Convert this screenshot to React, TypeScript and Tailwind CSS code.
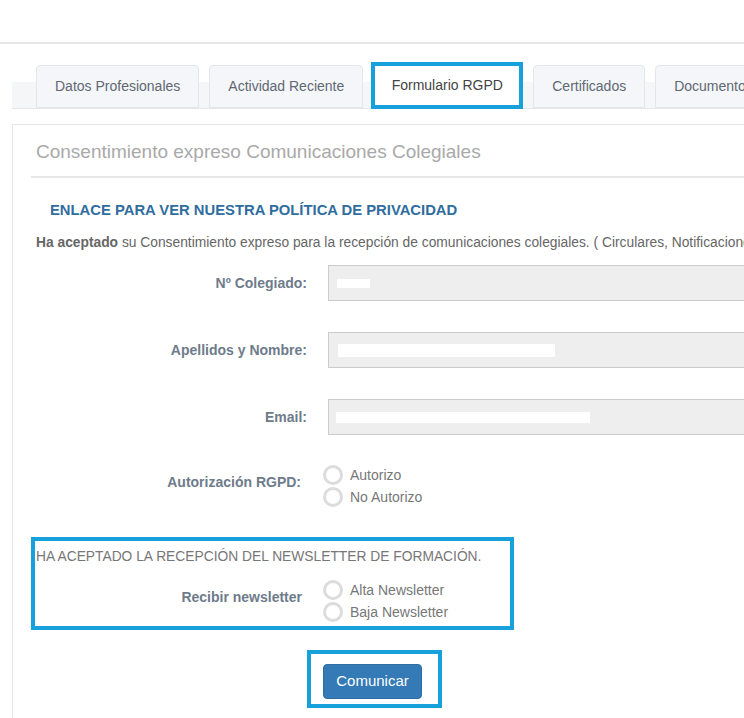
export default function App() {
  const tabs = ["Datos Profesionales", "Actividad Reciente", "Formulario RGPD", "Certificados", "Documentos"];
  const Radio = ({ label }: { label: string }) => (
    <div className="flex items-center h-[20px]">
      <span className="w-[20px] h-[20px] rounded-full border-[3px] border-[#dcdcdc] bg-white shrink-0" />
      <span className="ml-[7px] text-[14px] text-[#777777] leading-none">{label}</span>
    </div>
  );
  const Field = ({ label, bar, first }: { label: string; bar: { l: number; w: number; h: number }; first?: boolean }) => (
    <div className={`flex items-center ${first ? "mt-[13px]" : "mt-[31px]"}`}>
      <div className="w-[294px] text-right text-[14px] font-bold text-[#6e7b8b]">{label}</div>
      <div className="ml-[21px] w-[500px] h-[36px] bg-[#eeeeee] border border-[#cccccc] flex items-center">
        <div className="bg-white" style={{ marginLeft: bar.l, width: bar.w, height: bar.h }} />
      </div>
    </div>
  );
  return (
    <div className="w-[744px] h-[718px] overflow-hidden bg-white font-['Liberation_Sans',Arial,sans-serif]">
      <div className="w-[1000px]">
        <div className="h-[42px]" />
        <div className="h-[2px] bg-[#e6e6e6]" />
        {/* tabs */}
        <div className="mt-[18px] ml-[12px] pl-[24px] flex items-end gap-[10px] h-[47px] border-b border-[#e4e6e9] bg-[linear-gradient(to_bottom,transparent_20px,#f5f6f8_20px)]">
          {tabs.map((t, i) =>
            i === 2 ? (
              <div key={t} className="h-[47px] w-[152px] -ml-[2px] -mb-[1px] border-4 border-[#17a1dc] bg-white flex items-center justify-center text-[14px] text-[#444444]">
                {t}
              </div>
            ) : (
              <div key={t} className="h-[43px] px-[18px] border border-[#e3e6ea] rounded-t-[4px] bg-[#f4f6f9] flex items-center text-[14px] text-[#5f6873]">
                {t}
              </div>
            )
          )}
        </div>
        {/* panel */}
        <div className="mt-[15px] ml-[12px] border border-[#e6e6e6] h-[600px]">
          <div className="mx-[18px] pt-[17px] pb-[14px] border-b-2 border-[#e8e8e8]">
            <div className="pl-[5px] text-[19px] leading-[20px] text-[#a9a9a9]">Consentimiento expreso Comunicaciones Colegiales</div>
          </div>
          <div className="mt-[23px] pl-[37px] text-[14.8px] leading-[18px] font-bold text-[#2f6d9e]">ENLACE PARA VER NUESTRA POLÍTICA DE PRIVACIDAD</div>
          <div className="mt-[15px] pl-[23px] text-[13.8px] leading-[18px] text-[#666666] whitespace-nowrap">
            <span className="font-bold">Ha aceptado</span> su Consentimiento expreso para la recepción de comunicaciones colegiales. ( Circulares, Notificaciones )
          </div>
          <Field first label="Nº Colegiado:" bar={{ l: 8, w: 33, h: 9 }} />
          <Field label="Apellidos y Nombre:" bar={{ l: 9, w: 217, h: 13 }} />
          <Field label="Email:" bar={{ l: 7, w: 254, h: 11 }} />
          {/* RGPD */}
          <div className="mt-[30px] flex items-center">
            <div className="w-[294px] pr-[6px] pb-[7px] text-right text-[14px] font-bold text-[#6e7b8b]">Autorización RGPD:</div>
            <div className="ml-[16px] flex flex-col gap-[2px]">
              <Radio label="Autorizo" />
              <Radio label="No Autorizo" />
            </div>
          </div>
          {/* newsletter */}
          <div className="mt-[30px] ml-[18px] w-[483px] border-4 border-[#17a1dc] pl-[1px] pt-[7px] pb-[4px]">
            <div className="text-[13.8px] leading-[18px] text-[#777777] uppercase whitespace-nowrap">HA ACEPTADO LA RECEPCIÓN DEL NEWSLETTER DE FORMACIÓN.</div>
            <div className="mt-[14px] flex items-center">
              <div className="w-[266px] pb-[8px] text-right text-[14px] font-bold text-[#6e7b8b]">Recibir newsletter</div>
              <div className="ml-[21px] flex flex-col gap-[2px]">
                <Radio label="Alta Newsletter" />
                <Radio label="Baja Newsletter" />
              </div>
            </div>
          </div>
          {/* button */}
          <div className="mt-[20px] ml-[294px] w-[135px] h-[58px] border-4 border-[#17a1dc] pl-[12px] pt-[10px]">
            <button className="w-[99px] h-[35px] rounded-[4px] bg-[#337ab7] border border-[#2e6da4] text-white text-[15px]">Comunicar</button>
          </div>
        </div>
      </div>
    </div>
  );
}
